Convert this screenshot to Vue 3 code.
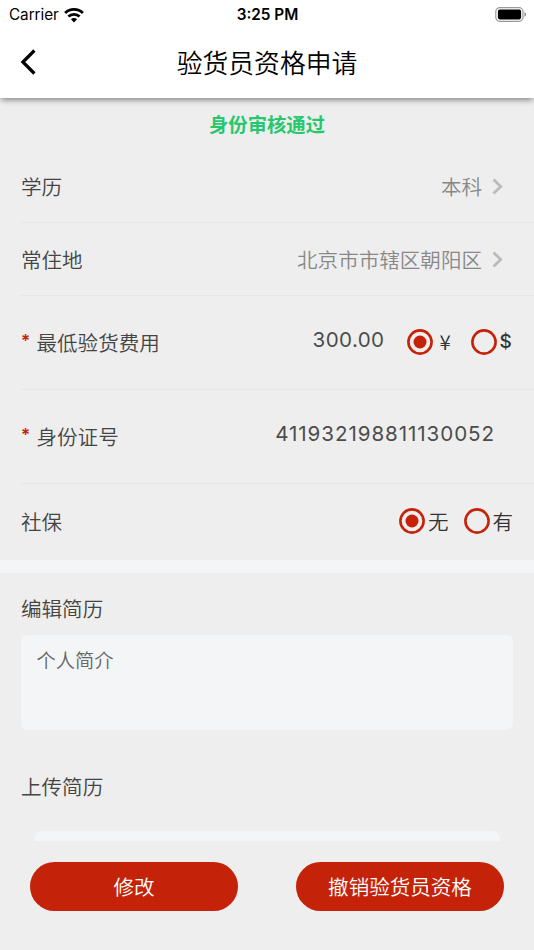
<template>
    <div class="page">
        <header class="header">
            <div class="status-bar">
                <div class="carrier">
                    <span>Carrier</span>
                    <svg class="wifi" width="20" height="15" viewBox="0 0 20 15">
                        <path d="M1.1 5 A12.8 12.8 0 0 1 18.9 5" />
                        <path d="M4.4 8.6 A8 8 0 0 1 15.6 8.6" />
                        <path class="dot" d="M10 14.4 L6.9 11.3 A4.4 4.4 0 0 1 13.1 11.3 Z" />
                    </svg>
                </div>
                <span class="time">3:25 PM</span>
                <svg class="battery" width="32" height="15" viewBox="0 0 32 15">
                    <rect class="shell" x="0.8" y="0.7" width="27.2" height="13.6" rx="4" />
                    <rect x="2.9" y="2.6" width="23.2" height="9.8" rx="1.8" />
                    <path class="tip" d="M29.4 5 Q31.2 5.8 31.2 7.5 Q31.2 9.2 29.4 10 Z" />
                </svg>
            </div>
            <div class="nav">
                <svg class="back" width="16" height="26" viewBox="0 0 16 26">
                    <path d="M14.4 1.5 L2.9 13 L14.4 24.5" />
                </svg>
                <h1>验货员资格申请</h1>
            </div>
        </header>

        <main class="content">
            <p class="result">身份审核通过</p>

            <div class="row" v-for="item in links" :key="item.label">
                <span class="label">{{ item.label }}</span>
                <span class="link-value">{{ item.value }}</span>
                <svg class="arrow" width="11" height="17" viewBox="0 0 11 17">
                    <path d="M1.5 1.5 L8.7 8.5 L1.5 15.5" />
                </svg>
            </div>

            <div class="row tall">
                <span class="required">*</span>
                <span class="label">最低验货费用</span>
                <span class="number price">{{ price }}</span>
                <div class="radio" v-for="item in currencies" :key="item.value" @click="currency = item.value">
                    <svg class="circle" width="26" height="26" viewBox="0 0 26 26">
                        <circle cx="13" cy="13" r="11.6" />
                        <circle v-if="currency === item.value" class="inner" cx="13" cy="13" r="6.5" />
                    </svg>
                    <span :class="item.value">{{ item.label }}</span>
                </div>
            </div>

            <div class="row tall">
                <span class="required">*</span>
                <span class="label">身份证号</span>
                <span class="number id-card">{{ idCard }}</span>
            </div>

            <div class="row last">
                <span class="label push">社保</span>
                <div class="radio" v-for="item in insurances" :key="item.label" @click="insured = item.value">
                    <svg class="circle" width="26" height="26" viewBox="0 0 26 26">
                        <circle cx="13" cy="13" r="11.6" />
                        <circle v-if="insured === item.value" class="inner" cx="13" cy="13" r="6.5" />
                    </svg>
                    <span>{{ item.label }}</span>
                </div>
            </div>

            <div class="divider"></div>

            <section class="resume">
                <h2>编辑简历</h2>
                <div class="intro">个人简介</div>
                <h2 class="upload-title">上传简历</h2>
                <div class="upload"></div>
            </section>
        </main>

        <footer class="footer">
            <button>修改</button>
            <button>撤销验货员资格</button>
        </footer>
    </div>
</template>

<script setup>
import { ref } from 'vue';

const links = [
    { label: '学历', value: '本科' },
    { label: '常住地', value: '北京市市辖区朝阳区' },
];

const currencies = [
    { label: '¥', value: 'cny' },
    { label: '$', value: 'usd' },
];

const insurances = [
    { label: '无', value: false },
    { label: '有', value: true },
];

const price = ref('300.00');
const idCard = ref('411932198811130052');
const currency = ref('cny');
const insured = ref(false);
</script>

<style>
    body{
        margin: 0;
        background: #eee;
    }
</style>

<style scoped>
    .page{
        display: flex;
        flex-direction: column;
        height: 950px;
        overflow: hidden;
        background: #eee;
        color: #444;
        font-family: "Noto Sans CJK SC", sans-serif;
        font-size: 20.55px;
        font-weight: 350;
        line-height: 30px;
    }

    .header{
        position: relative;
        flex: none;
        height: 98px;
        background: #fff;
        color: #000;
        box-shadow: 0 3px 6px -1px rgba(0, 0, 0, 0.45);
    }

    .status-bar{
        display: grid;
        grid-template-columns: 1fr auto 1fr;
        align-items: center;
        height: 26px;
        padding: 0 7px 0 9px;
        font-family: Inter, sans-serif;
        font-size: 15.3px;
        font-weight: 400;
    }

    .carrier{
        display: flex;
        align-items: center;
        gap: 5px;
        letter-spacing: -0.05px;
    }

    .wifi{
        fill: none;
        stroke: #000;
        stroke-width: 2.8;
    }

    .wifi .dot{
        fill: #000;
        stroke: none;
    }

    .time{
        margin-right: 1px;
        font-weight: 600;
    }

    .battery{
        justify-self: end;
        margin-top: -2px;
    }

    .battery .shell{
        fill: none;
        stroke: #999;
        stroke-width: 1.2;
    }

    .battery .tip{
        fill: #999;
    }

    .nav{
        display: grid;
        grid-template-columns: 60px 1fr 60px;
        align-items: center;
        height: 72px;
    }

    .back{
        margin-left: 20px;
        fill: none;
        stroke: #000;
        stroke-width: 3.2;
    }

    h1{
        margin: 0;
        font-size: 25.8px;
        font-weight: 350;
        text-align: center;
    }

    .content{
        flex: none;
        height: 743px;
        overflow: hidden;
    }

    .result{
        margin: 0;
        height: 52px;
        line-height: 53px;
        text-align: center;
        font-size: 19.35px;
        font-weight: 700;
        color: #28c76f;
    }

    .row{
        display: flex;
        align-items: center;
        box-sizing: border-box;
        height: 73px;
        margin-left: 21px;
        padding-right: 21px;
        border-bottom: 1px solid #e6e6e6;
    }

    .row.tall{
        height: 94px;
        padding-bottom: 2px;
    }

    .row.last{
        height: 76px;
        padding-bottom: 2px;
        border-bottom: none;
    }

    .link-value{
        margin-left: auto;
        color: #888;
    }

    .arrow{
        margin: 0 10px 0 10px;
        fill: none;
        stroke: #bbb;
        stroke-width: 2.8;
    }

    .required{
        width: 15.5px;
        padding-bottom: 2px;
        font-family: Inter, sans-serif;
        font-size: 17px;
        font-weight: 600;
        color: #c42309;
    }

    .number{
        margin-left: auto;
        padding-bottom: 4px;
        font-family: Inter, sans-serif;
        font-size: 20.6px;
        font-weight: 400;
        letter-spacing: 0.4px;
        color: #4c4c4c;
    }

    .price{
        margin-right: 22px;
    }

    .id-card{
        margin-right: 18px;
        letter-spacing: 0.92px;
    }

    .radio{
        display: flex;
        align-items: center;
        gap: 2.5px;
        color: #333;
    }

    .radio + .radio{
        margin-left: 15.5px;
    }

    .push{
        margin-right: auto;
    }

    .circle{
        fill: none;
        stroke: #c42309;
        stroke-width: 2.6;
    }

    .circle .inner{
        fill: #c42309;
        stroke: none;
    }

    .cny{
        width: 20.5px;
        padding-bottom: 2px;
        text-align: center;
    }

    .usd{
        width: 13.5px;
        font-family: Inter, sans-serif;
        font-size: 19px;
        font-weight: 500;
    }

    .divider{
        height: 13px;
        background: #f4f5f7;
    }

    .resume{
        padding: 20px 21px 0;
    }

    h2{
        margin: 0;
        font-size: 20.55px;
        font-weight: 350;
    }

    .intro{
        box-sizing: border-box;
        height: 95px;
        margin-top: 12px;
        padding: 10px 15.5px;
        border-radius: 6px;
        background: #f4f5f7;
        font-size: 19.3px;
        color: #666;
    }

    .upload-title{
        margin-top: 41px;
    }

    .upload{
        height: 100px;
        margin: 30px 13px 0;
        border-radius: 8px;
        background: #f4f5f7;
    }

    .footer{
        display: flex;
        justify-content: space-between;
        padding: 21px 30px 0;
    }

    button{
        width: 208px;
        height: 49px;
        padding: 0 0 1px;
        border: none;
        border-radius: 25px;
        background: #c42309;
        color: #fff;
        font: inherit;
    }
</style>
